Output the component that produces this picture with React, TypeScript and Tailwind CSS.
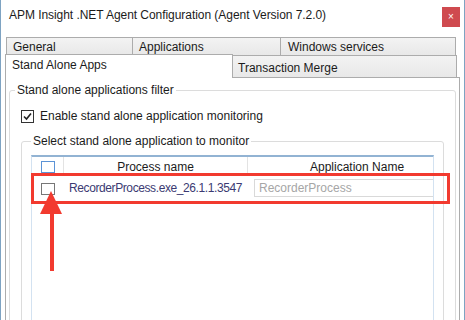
import React from 'react';

const font = { fontFamily: '"Liberation Sans", Arial, sans-serif' };

const backTabs = [
  { label: 'General', w: 'w-[126px]', pl: 'pl-[6px]' },
  { label: 'Applications', w: 'w-[148px]', pl: 'pl-[6px]' },
  { label: 'Windows services', w: 'w-[176px]', pl: 'pl-[7px]', last: true },
];

const Arrow: React.FC = () => (
  <svg className="absolute left-[38px] top-[191px]" width="26" height="82" viewBox="0 0 26 82">
    <polygon points="12,0 1,23 23,23" fill="#f23a2f" />
    <rect x="11" y="20" width="4" height="60" fill="#f23a2f" />
  </svg>
);

export default function App() {
  return (
    <div
      className="relative w-[465px] h-[320px] overflow-hidden bg-white border-x border-[#7ea3c2] text-[12px] text-[#1b1b1b]"
      style={font}
    >
      {/* Title bar */}
      <div className="flex items-start h-[37px]">
        <div className="pl-[8px] pt-[7px] leading-[16px] tracking-[-0.05px]">
          APM Insight .NET Agent Configuration (Agent Version 7.2.0)
        </div>
        <div className="ml-auto mr-[4px] mt-[7px] w-[18px] h-[20px] bg-[#cf4a4f] flex items-center justify-center text-white text-[10px] leading-none">
          ×
        </div>
      </div>

      {/* Back row of tabs */}
      <div className="flex ml-[5px] h-[18px]">
        {backTabs.map((t) => (
          <div
            key={t.label}
            className={`${t.w} ${t.pl} border-l border-t ${t.last ? 'border-r' : ''} border-[#acacac] bg-gradient-to-b from-[#f3f3f3] to-[#e8e8e8] leading-[18px]`}
          >
            {t.label}
          </div>
        ))}
      </div>

      {/* Front row of tabs */}
      <div className="flex items-end ml-[4px] h-[22px]">
        <div className="relative z-10 w-[228px] h-[24px] -mb-px bg-white border-l border-t border-r border-[#acacac] pl-[6px] pt-[2px] leading-[16px]">
          Stand Alone Apps
        </div>
        <div className="w-[224px] h-[22px] border-t border-r border-[#acacac] bg-gradient-to-b from-[#f3f3f3] to-[#e8e8e8] pl-[5px] pt-[4px] leading-[16px]">
          Transaction Merge
        </div>
      </div>

      {/* Tab page */}
      <div className="ml-[4px] w-[455px] h-[260px] border border-[#acacac] bg-white pt-[4px]">
        <fieldset className="mx-[3px] h-[250px] border border-[#dcdcdc] rounded-[3px] px-[5px]">
          <legend className="px-[2px] leading-[16px]">Stand alone applications filter</legend>

          <div className="flex items-center gap-[6px] ml-[6px] mt-[10px] h-[16px]">
            <div className="w-[13px] h-[13px] border border-[#333333] bg-white flex items-center justify-center">
              <svg width="9" height="9" viewBox="0 0 9 9">
                <path d="M1 4.5 L3.5 7 L8 1.5" fill="none" stroke="#222222" strokeWidth="1.6" />
              </svg>
            </div>
            <span className="leading-[16px]">Enable stand alone application monitoring</span>
          </div>

          <fieldset className="mx-[6px] mt-[9px] h-[200px] border border-[#dcdcdc] rounded-[3px] px-[9px]">
            <legend className="px-[2px] leading-[16px]">Select stand alone application to monitor</legend>

            <div className="mt-[6px] h-[180px] border-l border-r border-[#d3e2f1] border-t-2 border-t-[#92b3d3]">
              {/* Header */}
              <div className="flex h-[19px] items-center">
                <div className="w-[32px] h-full flex items-center pl-[9px] border-r border-[#e3e3e3]">
                  <div className="w-[14px] h-[12px] border border-[#5c93d6] bg-white"></div>
                </div>
                <div className="w-[184px] h-full flex items-center justify-center border-r border-[#e3e3e3]">
                  Process name
                </div>
                <div className="flex-1 h-full flex items-center pl-[62px]">Application Name</div>
              </div>

              {/* Row */}
              <div className="flex items-center h-[24px]">
                <div className="w-[32px] flex pl-[9px] pt-[1px]">
                  <div className="w-[14px] h-[12px] border border-[#777777] bg-white"></div>
                </div>
                <div className="w-[190px] pl-[5px] text-[#3b3a72] leading-[16px] tracking-[-0.4px]">
                  RecorderProcess.exe_26.1.1.3547
                </div>
                <div className="flex-1 h-[18px] border-y border-l border-[#d9d9d9] pl-[4px] leading-[16px] text-[#a6a6a6]">
                  RecorderProcess
                </div>
              </div>
            </div>
          </fieldset>
        </fieldset>
      </div>

      {/* Annotation */}
      <div className="absolute left-[30px] top-[173px] w-[419px] h-[31px] border-[3px] border-[#f23a2f]"></div>
      <Arrow />
    </div>
  );
}
